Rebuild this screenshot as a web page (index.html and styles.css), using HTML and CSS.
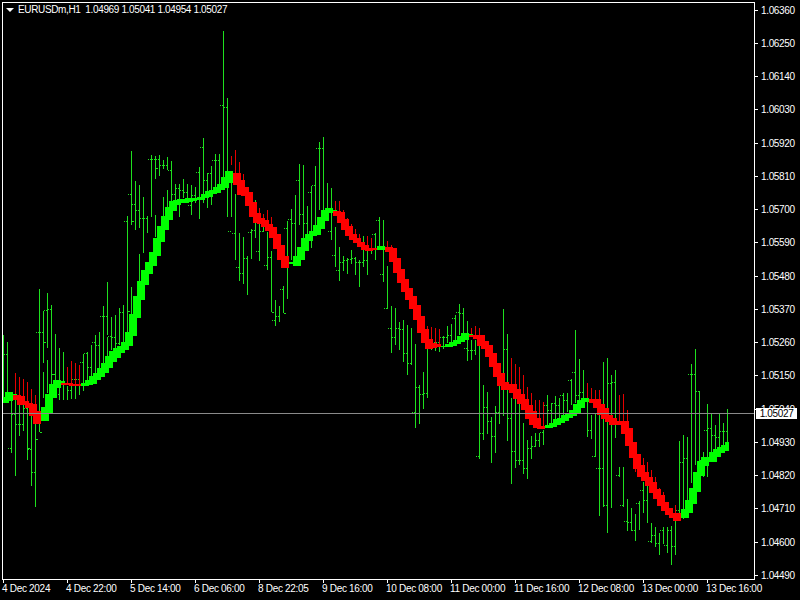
FILE: index.html
```html
<!DOCTYPE html>
<html lang="en">
<head>
<meta charset="utf-8">
<title>EURUSDm,H1</title>
<link rel="stylesheet" href="styles.css">
</head>
<body>
<main class="terminal">
  <section class="chart">
    <div class="plot">
      <svg id="canvas" class="canvas" viewBox="3 3 751 576" shape-rendering="crispEdges"></svg>
      <header class="legend">
        <span class="legend-arrow"></span>
        <span class="legend-text">EURUSDm,H1&nbsp; 1.04969 1.05041 1.04954 1.05027</span>
      </header>
    </div>
  </section>
  <aside class="price-axis">
    <div class="price">1.06360</div>
    <div class="price">1.06250</div>
    <div class="price">1.06140</div>
    <div class="price">1.06030</div>
    <div class="price">1.05920</div>
    <div class="price">1.05810</div>
    <div class="price">1.05700</div>
    <div class="price">1.05590</div>
    <div class="price">1.05480</div>
    <div class="price">1.05370</div>
    <div class="price">1.05260</div>
    <div class="price">1.05150</div>
    <div class="price">1.05040</div>
    <div class="price">1.04930</div>
    <div class="price">1.04820</div>
    <div class="price">1.04710</div>
    <div class="price">1.04600</div>
    <div class="price">1.04490</div>
    <div class="current-price">1.05027</div>
  </aside>
  <footer class="time-axis">
    <div class="time">4 Dec 2024</div>
    <div class="time">4 Dec 22:00</div>
    <div class="time">5 Dec 14:00</div>
    <div class="time">6 Dec 06:00</div>
    <div class="time">8 Dec 22:05</div>
    <div class="time">9 Dec 16:00</div>
    <div class="time">10 Dec 08:00</div>
    <div class="time">11 Dec 00:00</div>
    <div class="time">11 Dec 16:00</div>
    <div class="time">12 Dec 08:00</div>
    <div class="time">13 Dec 00:00</div>
    <div class="time">13 Dec 16:00</div>
  </footer>
</main>
<script src="script.js"></script>
</body>
</html>
```
FILE: styles.css
```css
html, body { margin: 0; background: #000; }
body {
  width: 800px;
  height: 600px;
  overflow: hidden;
  font-family: "Liberation Sans", Arial, sans-serif;
  font-size: 10px;
  letter-spacing: -0.3px;
  color: #fff;
}
.terminal {
  display: grid;
  grid-template-columns: 755px 45px;
  grid-template-rows: 580px 20px;
  width: 800px;
  height: 600px;
}
.chart { padding: 2px 0 0 2px; box-sizing: border-box; }
.plot {
  position: relative;
  box-sizing: border-box;
  width: 753px;
  height: 578px;
  border: 1px solid #fff;
}
.canvas { display: block; width: 751px; height: 576px; }
.legend {
  position: absolute;
  left: 3px;
  top: 0;
  display: flex;
  align-items: center;
  gap: 4px;
  height: 13px;
  letter-spacing: -0.36px;
  white-space: pre;
}
.legend-arrow {
  width: 0;
  height: 0;
  border-left: 4px solid transparent;
  border-right: 4px solid transparent;
  border-top: 4px solid #fff;
}
.price-axis {
  position: relative;
  display: flex;
  flex-direction: column;
  gap: 22.27px;
  padding-top: 4.5px;
  letter-spacing: -0.35px;
}
.price {
  display: flex;
  align-items: center;
  gap: 3px;
  height: 11px;
  line-height: 11px;
}
.price::before { content: ""; width: 3px; height: 1px; background: #fff; }
.current-price {
  position: absolute;
  left: 1px;
  top: 408px;
  width: 41px;
  height: 11px;
  line-height: 11px;
  text-align: center;
  background: #fff;
  color: #000;
}
.time-axis {
  grid-column: 1 / 3;
  display: flex;
  padding-left: 3px;
}
.time {
  position: relative;
  width: 64px;
  flex: none;
  padding-top: 3px;
  line-height: 12px;
  text-indent: -1px;
  white-space: nowrap;
}
.time::before {
  content: "";
  position: absolute;
  left: 0;
  top: 0;
  width: 1px;
  height: 3px;
  background: #fff;
}
```
FILE: script.js
```js
// [x, high, low, open tick y, close tick y]
const bars = [
[3,335,402],[7,342,401,354,354],[11,395,453,448,448],[15,395,476,414,414],[19,405,436,424,424],[23,405,431,424,424],[27,408,460,408,448],[31,410,486,449,449],[35,420,507,472,439],
[39,289,432,332,432],[43,311,363,332,342],[47,293,348,310,310],[43,372,398],[47,360,393],[51,305,385,309,374],[55,334,380,374,374],[59,348,400,394,394],[63,352,400],[67,386,400],[71,385,399,390,390],[75,375,399,379,379],[79,384,395,379,379],
[83,354,391,362,362],[87,352,383,353,353],[91,345,380,367,367],[95,335,375,342,342],[99,332,370,345,345],[103,306,363,316,316],[107,282,335,316,316],[107,337,362],[111,317,350,336,336],[115,315,355,337,337],[119,308,345,343,343],[123,305,352,312,312],
[127,216,332,221,311],[131,151,225,194,221],[135,181,230,204,204],[131,287,333],[139,185,228,210,210],[139,254,313],[143,197,253,218,218],[147,216,233,218,218],[151,155,217,159,159],[155,156,179,159,168],[155,215,237],[159,155,176,159,159],[163,160,169,165,165],[163,197,216],[167,157,170,165,165],[167,190,208],[171,161,210,170,170],
[175,184,210,194,194],[179,184,217,188,188],[183,179,198,190,190],[187,184,203,192,192],[191,185,215,205,205],[195,187,203,195,195],[199,167,219,172,172],[203,138,203,147,147],[207,173,208,180,180],[211,166,205,173,173],[215,154,192,160,160],[219,154,188,160,160],[223,31,178,105,105],[227,98,217,107,107],
[231,176,217,231,231],[235,194,260,233,233],[239,233,281,267,267],[243,237,284,273,273],[247,256,295,258,258],[251,229,259,232,232],[255,200,238,230,230],[259,212,261,251,251],[263,217,232,231,231],
[267,232,270,265,265],[271,251,312,257,312],[275,300,326,320,320],[279,306,322,316,316],[283,286,313,289,313],[287,221,299,228,228],[291,209,260,219,219],[295,195,257,223,223],[299,164,225,180,180],[303,165,248,214,214],[307,206,247,223,223],[311,186,248,192,192],[315,166,225,185,185],[319,142,210,148,148],[323,137,210,148,148],[327,183,221,220,220],[331,188,240,231,231],
[335,227,267,255,255],[339,247,281,270,270],[343,256,271,262,262],[347,258,274,260,260],[351,250,264,259,259],[355,257,275,258,258],[359,260,287,262,262],[363,236,267,262,262],[367,247,275,260,260],[371,240,254,248,248],[375,233,260,234,234],[379,217,246,220,220],[383,220,282,274,274],
[387,266,309,308,308],[391,306,353,328,328],[395,308,345,337,337],[399,322,350,328,328],[403,320,362,329,329],[407,325,375,353,353],[411,328,365,363,363],[415,344,428,412,412],[419,385,424,387,387],[423,372,409,394,394],[427,342,398,393,393],[431,335,350,346,346],[435,328,351,342,342],[439,340,352,342,342],[443,336,349,337,337],[447,326,343,337,337],[451,324,345,335,335],[455,315,340,318,318],[459,304,335,312,312],[463,308,333,313,313],[467,321,361,348,348],[471,340,360,350,350],[475,340,355,350,350],[479,337,459,456,456],[483,385,440,433,433],[487,392,434,407,407],[491,417,463,421,421],[495,406,453,436,436],[499,368,424,412,412],[503,309,416,413,413],[507,334,441,349,349],[511,398,484,418,418],[515,386,468,451,451],[519,386,465,460,460],[523,423,474,460,460],[527,440,479,468,468],[531,436,459,448,448],
[535,433,447,446,446],[539,433,447,440,440],[543,430,445,432,432],[547,395,427,405,405],[551,403,423,410,410],[555,396,420,403,403],[559,398,420,405,405],[563,393,416,395,395],[567,393,412,400,400],[571,379,405,380,380],[575,330,403,372,372],[579,359,402,395,395],[583,370,403,392,392],[587,383,437,398,398],[591,415,439,430,430],[595,413,457,456,456],[599,410,516,468,468],[603,362,507,468,468],[607,358,533,505,505],[611,375,508,383,383],[615,370,438,382,382],[619,467,477,475,475],[623,467,507,505,505],[627,499,531,521,521],[631,508,531,522,522],[635,514,541,530,530],[639,501,530,503,503],[643,482,513,490,490],[647,483,523,500,500],[651,523,543,541,541],[655,527,547,535,535],[659,533,555,543,543],[663,527,544,530,530],[667,527,553,545,545],[671,526,565,530,530],[675,517,555,546,546],[679,441,517,510,510],[683,435,519,462,462],[687,437,500,458,458],[691,364,483,374,374],[695,349,465,374,374],[699,391,463,391,391],[703,452,477,460,460],[707,404,477,430,430],[711,413,455,428,428],[715,425,453,435,435],[719,413,450,437,437],[723,423,450,431,431],[727,409,447,431,431]
];
// [x, top, bottom] for wicks standing above a red stretch of the band
const redWicks = [[15,373,396],[19,377,400],[23,379,402],[27,382,404],[31,389,407],[35,395,412],[67,367,384],[71,361,384],[75,363,384],[79,365,384],
[231,156,165],[235,150,175],[239,162,181],[243,174,187],[247,187,196],[251,195,205],[255,204,212],[259,208,216],[263,214,220],[267,210,224],[271,217,232],[275,228,240],
[335,201,211],[339,201,213],[343,210,223],[347,218,229],[351,224,234],[355,229,238],[359,234,242],[367,236,248],[371,238,248],[387,241,247],[391,245,255],[395,253,263],
[427,326,340],[431,327,343],[435,328,344],[439,329,345],[471,328,335],[475,326,336],[479,328,338],[483,335,349],[487,344,357],[491,355,366],[495,364,376],[511,358,386],[515,364,389],[519,367,394],[523,375,399],[527,387,405],[531,393,411],
[535,400,418],[539,400,424],[543,402,427],[587,383,399],[591,388,400],[595,390,404],[599,390,408],[619,395,422],[623,394,422],[627,410,422],[635,460,472],[643,458,479],[647,462,485],[651,470,491],[655,477,497],[659,488,503],[663,492,508],[675,505,513]
];
// band runs: [first x, colour, t0, b0, t1, b1, ...]; one block every 4px, 8px wide
const runs = [
[1,'g',397,403,392,400,394,397],
[13,'r',395,400,398,405,401,405,403,408,406,416,411,424,417,420],
[41,'g',407,419,394,413,384,395,380,388,381,385],
[61,'r',383,385,383,385,384,386,384,386,384,386],
[81,'g',383,386,380,385,376,384,373,380,368,377,363,373,356,368,351,362,348,358,346,353,342,350,332,340,314,327,296,312,281,297,270,284,262,274,252,263,238,251,226,239,216,228,207,218,201,210,200,205,199,203,199,203,198,202,198,201,198,200,197,200,194,198,191,197,190,194,187,193,184,190,177,183,171,183,175,177],
[233,'r',176,185,180,195,187,196,196,206,206,217,216,223,218,224,220,227,224,231,232,238,240,249,249,260,258,268],
[289,'g',262,264,256,264,247,254,238,247,234,241,231,236,225,231,217,225,210,218,208,213,210,213],
[333,'r',211,216,213,223,223,230,229,236,234,240,238,243,242,247,245,250,248,251,248,250],
[377,'g',246,250],
[385,'r',247,252,255,262,263,273,273,283,282,292,291,300,299,309,309,320,320,333,331,343,339,349,343,348,344,347],
[441,'g',346,347,344,347,342,346,340,344,336,342,333,340,334,337],
[469,'r',335,337,336,339,337,346,341,349,349,357,357,367,366,377,376,386,382,390,385,388,386,393,389,399,394,404,399,410,405,419,411,425,418,428,426,429],
[545,'g',425,428,423,427,419,425,418,423,415,421,413,418,410,416,404,413,400,408,398,402,399,402],
[589,'r',399,403,400,408,404,415,408,419,415,422,418,425,421,425,422,425,422,434,428,446,447,458,457,469,467,477,472,481,479,486,485,493,491,499,497,506,503,511,508,515,513,518,513,521],
[681,'g',509,518,500,508,488,498,472,485,461,474,457,466,457,462,452,462,449,457,447,453,445,451,442,447]
];

const COLORS = { wickG: '#1ee01e', wickR: '#e60000', g: '#00ff00', r: '#ff0000' };
const BAND_END = 729;
const JOIN = 4;   // overlap between blocks on a steep stretch
const NS = 'http://www.w3.org/2000/svg';
const svg = document.getElementById('canvas');
function rect(x, y, w, h, fill) {
  const r = document.createElementNS(NS, 'rect');
  r.setAttribute('x', x); r.setAttribute('y', y);
  r.setAttribute('width', w); r.setAttribute('height', h);
  r.setAttribute('fill', fill);
  svg.appendChild(r);
}
for (const [x, hi, lo, o, c] of bars) {
  rect(x, hi, 1, lo - hi, COLORS.wickG);
  if (o !== undefined) { rect(x - 3, o, 1, 1, COLORS.wickG); rect(x - 1, o, 1, 1, COLORS.wickG); }
  if (c !== undefined && c !== o) rect(x + 1, c, 2, 1, COLORS.wickG);
}
for (const [x, t, b] of redWicks) rect(x, t, 1, b - t, COLORS.wickR);
let prevTop = null, prevBottom = null;
for (const run of runs) {
  const [start, col, ...pairs] = run;
  for (let i = 0; i < pairs.length; i += 2) {
    let t = pairs[i], b = pairs[i + 1];
    if (prevTop !== null) {
      if (prevTop - t >= 5) b = Math.max(b, prevTop + JOIN);      // steep rise
      if (b - prevBottom >= 5) t = Math.min(t, prevBottom - JOIN); // steep fall
    }
    const x = start + 2 * i;
    rect(x, t, Math.min(8, BAND_END - x), b - t, COLORS[col]);
    prevTop = pairs[i]; prevBottom = pairs[i + 1];
  }
}
rect(3, 413, 751, 1, '#8a8a8a');
```
